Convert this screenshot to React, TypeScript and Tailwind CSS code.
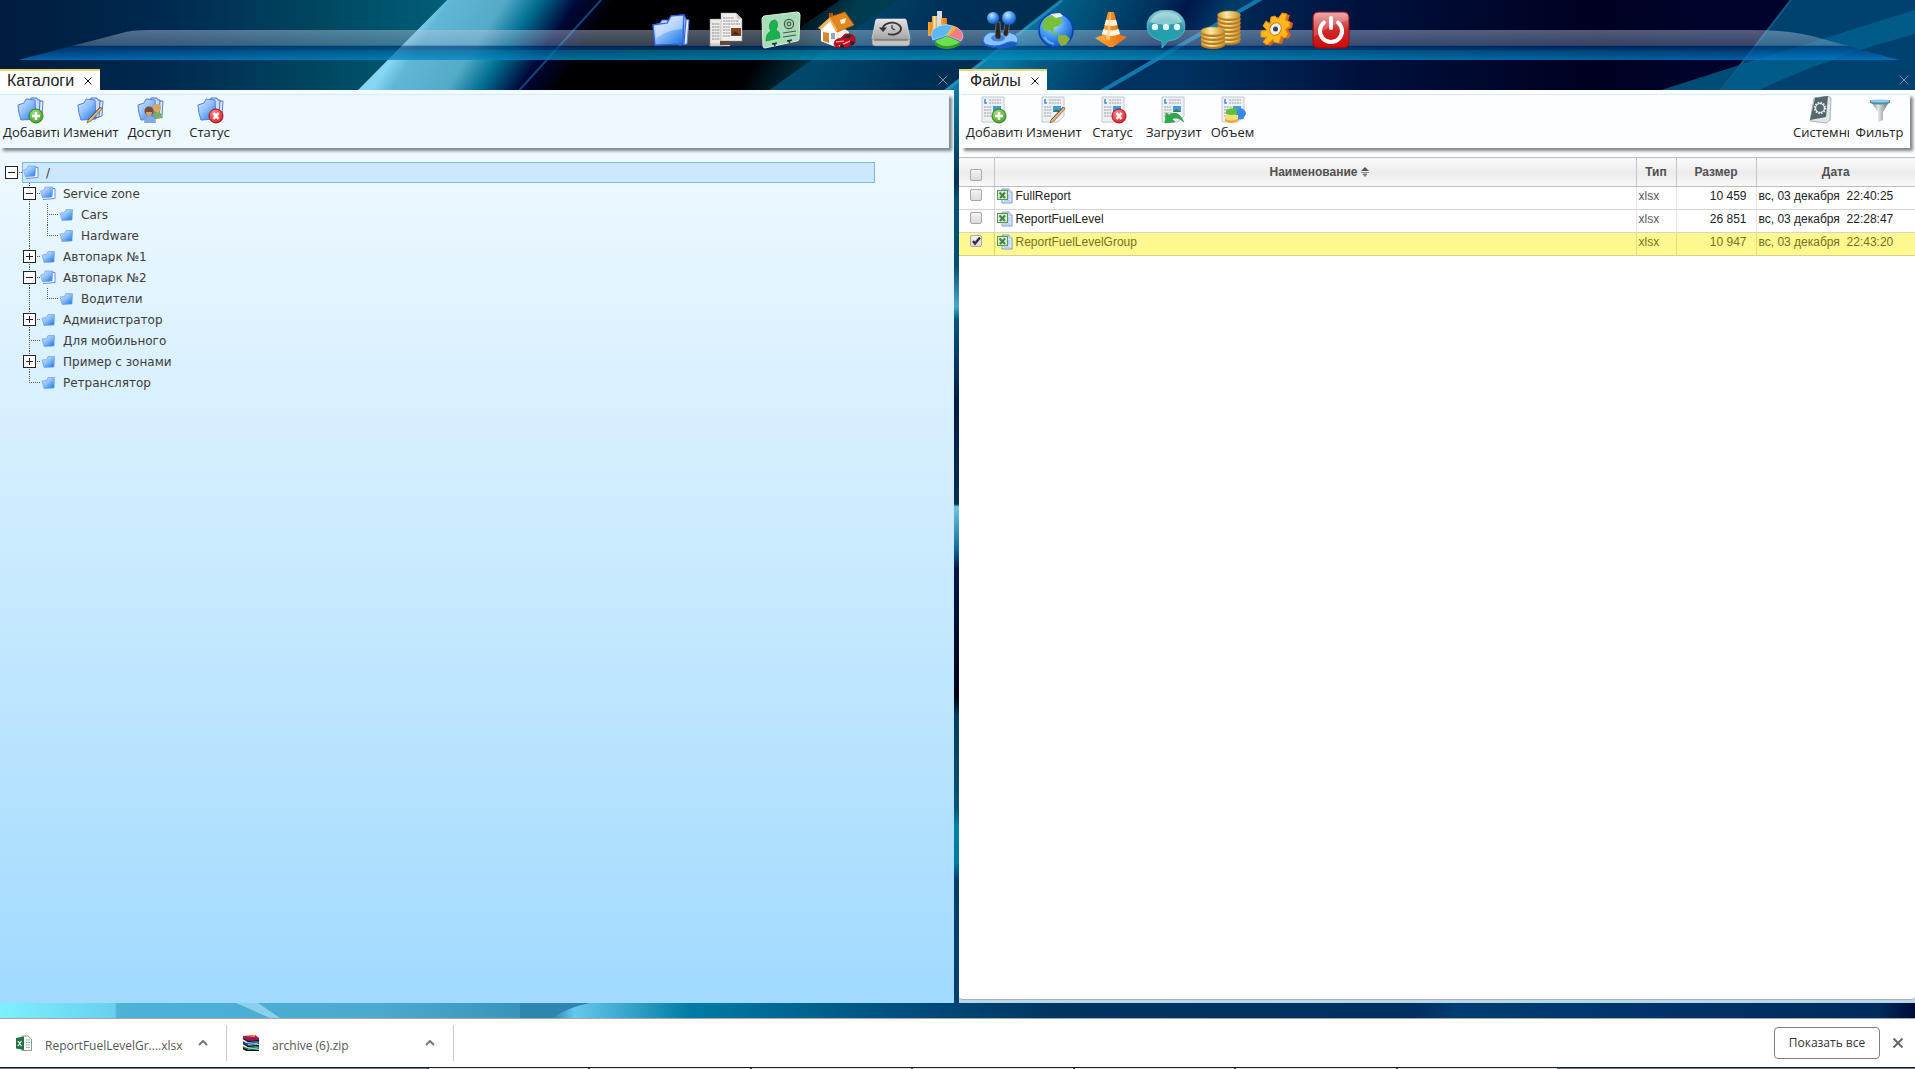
import type { ReactNode } from 'react';

function Defs() {
  return (
    <svg className="absolute h-0 w-0" aria-hidden="true">
      <defs>
        <linearGradient id="folder" x1="0" y1="0" x2="0.9" y2="1">
          <stop offset="0" stopColor="#d6eaff" />
          <stop offset="0.5" stopColor="#8fbdf8" />
          <stop offset="1" stopColor="#1a78e6" />
        </linearGradient>
        <linearGradient id="steel" x1="0" y1="0" x2="0" y2="1">
          <stop offset="0" stopColor="#e3e3e3" />
          <stop offset="1" stopColor="#a5a5a5" />
        </linearGradient>
        <linearGradient id="steelH" x1="0" y1="0" x2="1" y2="0">
          <stop offset="0" stopColor="#777" />
          <stop offset="0.4" stopColor="#e6e6e6" />
          <stop offset="1" stopColor="#6b6b6b" />
        </linearGradient>
        <linearGradient id="gold" x1="0" y1="0" x2="1" y2="0">
          <stop offset="0" stopColor="#d49c3c" />
          <stop offset="0.4" stopColor="#ffe9a3" />
          <stop offset="1" stopColor="#c48a2c" />
        </linearGradient>
        <linearGradient id="orange" x1="0" y1="0" x2="1" y2="0">
          <stop offset="0" stopColor="#ffa63d" />
          <stop offset="1" stopColor="#e8720a" />
        </linearGradient>
        <linearGradient id="red" x1="0" y1="0" x2="0" y2="1">
          <stop offset="0" stopColor="#e69a9a" />
          <stop offset="0.5" stopColor="#cf2a2a" />
          <stop offset="1" stopColor="#d00808" />
        </linearGradient>
        <radialGradient id="ball" cx="0.4" cy="0.3" r="0.8">
          <stop offset="0" stopColor="#c5e7ff" />
          <stop offset="0.5" stopColor="#3d93f0" />
          <stop offset="1" stopColor="#0a3fae" />
        </radialGradient>
        <radialGradient id="bubble" cx="0.5" cy="0.8" r="0.9">
          <stop offset="0" stopColor="#1ea3b4" />
          <stop offset="0.6" stopColor="#2d98a8" />
          <stop offset="1" stopColor="#b4e2e6" />
        </radialGradient>
        <radialGradient id="green" cx="0.4" cy="0.3" r="0.8">
          <stop offset="0" stopColor="#a5e07c" />
          <stop offset="1" stopColor="#3c9a22" />
        </radialGradient>
        <radialGradient id="redBall" cx="0.4" cy="0.3" r="0.8">
          <stop offset="0" stopColor="#ff8f8f" />
          <stop offset="1" stopColor="#d3121c" />
        </radialGradient>
      </defs>
    </svg>
  );
}

function Wallpaper() {
  return (
    <svg
      className="absolute inset-0 h-full w-full"
      viewBox="0 0 1915 1069"
      preserveAspectRatio="none"
      aria-hidden="true"
    >
      <defs>
        <linearGradient id="sky" gradientUnits="userSpaceOnUse" x1="0" y1="0" x2="1915" y2="0">
          <stop offset="0" stopColor="#001c3e" />
          <stop offset="0.09" stopColor="#002a50" />
          <stop offset="0.17" stopColor="#004862" />
          <stop offset="0.235" stopColor="#006078" />
        </linearGradient>
        <linearGradient id="beam" gradientUnits="userSpaceOnUse" x1="405" y1="40" x2="540" y2="130">
          <stop offset="0" stopColor="#86d6f4" />
          <stop offset="0.1" stopColor="#5fb6d6" />
          <stop offset="0.38" stopColor="#54abc8" />
          <stop offset="0.55" stopColor="#006f92" />
          <stop offset="0.75" stopColor="#00083a" />
          <stop offset="0.95" stopColor="#000003" />
        </linearGradient>
        <linearGradient id="edge" gradientUnits="userSpaceOnUse" x1="780" y1="20" x2="830" y2="50">
          <stop offset="0" stopColor="#000003" />
          <stop offset="1" stopColor="#003c50" />
        </linearGradient>
        <linearGradient id="mid" gradientUnits="userSpaceOnUse" x1="850" y1="0" x2="1050" y2="100">
          <stop offset="0" stopColor="#00486a" />
          <stop offset="0.4" stopColor="#003058" />
          <stop offset="1" stopColor="#002c4c" />
        </linearGradient>
        <linearGradient id="mid2" gradientUnits="userSpaceOnUse" x1="1010" y1="40" x2="1170" y2="120">
          <stop offset="0" stopColor="#0e7ba6" />
          <stop offset="0.2" stopColor="#005c84" />
          <stop offset="0.65" stopColor="#00315c" />
          <stop offset="0.8" stopColor="#00164a" />
          <stop offset="1" stopColor="#003a66" />
        </linearGradient>
        <linearGradient id="night" gradientUnits="userSpaceOnUse" x1="1180" y1="0" x2="1700" y2="0">
          <stop offset="0" stopColor="#003260" />
          <stop offset="0.35" stopColor="#00103c" />
          <stop offset="0.8" stopColor="#000020" />
          <stop offset="1" stopColor="#00042c" />
        </linearGradient>
        <linearGradient id="seam" x1="0" y1="0" x2="0" y2="1">
          <stop offset="0" stopColor="#0a7ba5" />
          <stop offset="0.1" stopColor="#01304f" />
          <stop offset="0.12" stopColor="#005478" />
          <stop offset="0.19" stopColor="#004c70" />
          <stop offset="0.235" stopColor="#4aa8ce" />
          <stop offset="0.25" stopColor="#015782" />
          <stop offset="0.34" stopColor="#001c45" />
          <stop offset="0.45" stopColor="#012e58" />
          <stop offset="0.453" stopColor="#72c4ea" />
          <stop offset="0.5" stopColor="#0b6a9c" />
          <stop offset="0.52" stopColor="#00174c" />
          <stop offset="0.66" stopColor="#000018" />
          <stop offset="0.68" stopColor="#003c60" />
          <stop offset="0.78" stopColor="#005478" />
          <stop offset="0.8" stopColor="#0082a6" />
          <stop offset="0.84" stopColor="#0078a0" />
          <stop offset="0.86" stopColor="#003e6e" />
          <stop offset="1" stopColor="#003f6e" />
        </linearGradient>
        <linearGradient id="floor" x1="0" y1="0" x2="1" y2="0">
          <stop offset="0" stopColor="#7df0ff" />
          <stop offset="0.06" stopColor="#68d0ee" />
          <stop offset="0.061" stopColor="#4cb2d8" />
          <stop offset="0.2" stopColor="#4ba9cf" />
          <stop offset="0.29" stopColor="#348eb6" />
          <stop offset="0.3" stopColor="#66c8ee" />
          <stop offset="0.36" stopColor="#007ba5" />
          <stop offset="0.47" stopColor="#004f80" />
          <stop offset="0.55" stopColor="#003560" />
          <stop offset="0.74" stopColor="#002f62" />
          <stop offset="0.76" stopColor="#003d72" />
          <stop offset="0.9" stopColor="#003066" />
          <stop offset="0.98" stopColor="#002c5c" />
          <stop offset="1" stopColor="#000a38" />
        </linearGradient>
        <linearGradient id="dockGlass" x1="0" y1="0" x2="0" y2="1">
          <stop offset="0" stopColor="#b9c8e0" stopOpacity="0.45" />
          <stop offset="0.5" stopColor="#8ea6c4" stopOpacity="0.4" />
          <stop offset="0.54" stopColor="#003a78" stopOpacity="0.65" />
          <stop offset="1" stopColor="#0080d8" stopOpacity="0.7" />
        </linearGradient>
        <linearGradient id="dockGlow" x1="0" y1="0" x2="1" y2="0">
          <stop offset="0" stopColor="#00a0a0" stopOpacity="0" />
          <stop offset="0.4" stopColor="#00a8a0" stopOpacity="0.35" />
          <stop offset="0.6" stopColor="#00a8b0" stopOpacity="0.35" />
          <stop offset="1" stopColor="#00a0a0" stopOpacity="0" />
        </linearGradient>
      </defs>

      <rect width="1915" height="1069" fill="#003f6e" />
      <rect width="500" height="95" fill="url(#sky)" />
      <polygon points="447,0 1300,0 1300,95 353,95" fill="#000003" />
      <polygon points="447,0 640,0 550,95 353,95" fill="url(#beam)" />
      <path d="M601 0L515 95" stroke="#0f4478" strokeWidth="2" />
      <polygon points="840,0 900,0 762,95 700,95" fill="url(#edge)" />
      <polygon points="897,0 1062,0 940,95 762,95" fill="url(#mid)" />
      <polygon points="1062,0 1260,0 1100,95 938,95" fill="url(#mid2)" />
      <path d="M1062 0L940 95" stroke="#2a9cc8" strokeWidth="3" opacity="0.7" />
      <polygon points="1260,0 1915,0 1915,95 1095,95" fill="url(#night)" />
      <path d="M1262 -2Q1180 46 1097 94" stroke="#0f78ac" strokeWidth="4" fill="none" />
      <polygon points="1791,0 1915,0 1915,95 1717,95" fill="#00426f" />
      <path d="M1915 10Q1780 52 1655 92H1755Q1830 56 1915 34Z" fill="#006492" opacity="0.75" />
      <path d="M1791 0L1717 95" stroke="#0f5a86" strokeWidth="2" />

      <rect x="950" y="90" width="14" height="920" fill="url(#seam)" />
      <rect y="1000" width="1915" height="24" fill="url(#floor)" />
      <path d="M236 1003H258L280 1018H270Z" fill="#b4e8fa" opacity="0.6" />
      <path d="M590 1003Q566 1008 552 1018H520V1003Z" fill="#2d86b0" />

      <path d="M18 60L122 33Q130 30 150 30H1750Q1790 30 1812 36L1899 60Z" fill="url(#dockGlass)" />
      <rect x="60" y="50" width="1780" height="10" fill="url(#dockGlow)" />
    </svg>
  );
}

function Big({ children }: { children: ReactNode }) {
  return (
    <svg viewBox="0 0 40 40" className="h-10 w-10" aria-hidden="true">
      {children}
    </svg>
  );
}

const coins = (x: number, top: number, n: number, rx: number) =>
  Array.from({ length: n }, (_, i) => n - 1 - i).map((i) => (
    <g key={`${x}-${i}`}>
      <ellipse cx={x} cy={top + 3 + i * 4} rx={rx} ry="4" fill="#b57a20" />
      <ellipse cx={x} cy={top + i * 4 + 1} rx={rx} ry="4" fill="url(#gold)" stroke="#c9922e" strokeWidth="0.6" />
    </g>
  ));

const dock: { name: string; icon: ReactNode }[] = [
  {
    name: 'Каталоги',
    icon: (
      <Big>
        <path d="M31 9L38 10L36 34L28 35Z" fill="#e8f2ff" stroke="#5b82e0" />
        <path d="M2 15L9 13L11 10H17L18 12L20 6L33 5L35 9L33 34L5 35Z" fill="#c2dcff" stroke="#3a5fe0" strokeWidth="1.2" />
        <path d="M2 15L16 13L20 6L33 5L32 34L4 35Z" fill="url(#folder)" stroke="#2f5ce0" strokeWidth="1.2" />
        <path d="M4 16L17 14L21 7L32 6L31 19Q16 20 5 28Z" fill="#fff" opacity="0.4" />
      </Big>
    ),
  },
  {
    name: 'Файлы',
    icon: (
      <Big>
        <path d="M4 9H16V36H4Z M16 34H24V36H4V34Z" fill="#eceae6" stroke="#8a8a86" strokeWidth="0.5" />
        <path d="M15 3H30L36 9V31H15Z" fill="#f3f1ee" stroke="#9a9a96" strokeWidth="0.5" />
        <path d="M30 3L31 9H36Z" fill="#c9c7c4" />
        <path d="M17 8H28M17 11H33M17 14H34M17 17H24M17 20H24M17 23H24M17 26H24M6 14H14M6 17H14M6 20H14M6 23H14M6 26H14M6 29H14" stroke="#888" strokeDasharray="2 0.6" />
        <rect x="25" y="18" width="10" height="8" fill="#87421f" />
        <path d="M26 25L29 21L34 25" fill="#33312e" />
        <rect x="14" y="31" width="10" height="4" fill="#5d4a3d" />
      </Big>
    ),
  },
  {
    name: 'Контакты',
    icon: (
      <Big>
        <path d="M1 9Q1 7 3 6L36 2Q39 2 39 5L38 29Q38 31 36 31L4 38Q2 38 2 36Z" fill="#a9dcb8" stroke="#d5f0dc" />
        <path d="M13 10Q17 10 16.5 16L15 20Q19 21 19 28L5 31Q5 23 10 21Q8 19 8.5 15Q9 11 13 10Z" fill="#19b24d" stroke="#0a8c38" strokeWidth="0.6" />
        <circle cx="28" cy="14" r="4.6" fill="none" stroke="#44584c" strokeWidth="1.2" />
        <circle cx="28" cy="14" r="1.8" fill="none" stroke="#44584c" strokeWidth="1.2" />
        <path d="M22 23L35 21M22 27L35 25" stroke="#44584c" strokeWidth="1.2" />
        <path d="M11 34L16 33M13.5 33L14 36M26 31L31 30M28.5 30V33" stroke="#1d3a29" strokeWidth="1.6" />
      </Big>
    ),
  },
  {
    name: 'Дом и авто',
    icon: (
      <Big>
        <path d="M5 16L14 8L33 22V35L20 37L5 31Z" fill="#f2ece4" />
        <path d="M5 16L14 8L20 20V37L5 31Z" fill="#fffdf8" />
        <path d="M13 3H17V8H13Z" fill="#b5520f" />
        <path d="M14 7L29 2L38 15L21 22Z" fill="#e3861d" stroke="#b9610b" strokeWidth="0.8" />
        <path d="M14 7L2 18L5 20L14 11L20 22L22 21Z" fill="#f2b45b" />
        <path d="M24 10L30 8L29 13L25 14Z" fill="#fff3df" />
        <path d="M7 22L13 23V33L7 31Z" fill="#d08a34" />
        <rect x="15" y="23" width="4" height="6" fill="#8fa7b8" />
        <path d="M18 34Q18 29 25 28L29 24Q37 23 39 28V33Q34 38 24 38Q18 38 18 34Z" fill="#c60d20" stroke="#7a0511" strokeWidth="0.6" />
        <path d="M27 28L30 25H35L34 28Z" fill="#2b2b38" />
        <path d="M20 32L28 31M23 36L34 31" stroke="#f5c9cc" strokeWidth="1.2" />
        <circle cx="26" cy="36" r="2" fill="#222" />
        <circle cx="36" cy="33" r="2" fill="#222" />
      </Big>
    ),
  },
  {
    name: 'Резервные копии',
    icon: (
      <Big>
        <path d="M6 9H34Q35 9 35.5 11L39 29H1L4.5 11Q5 9 6 9Z" fill="url(#steel)" stroke="#efefef" strokeWidth="0.6" />
        <path d="M1 29H39V33Q39 36 36 36H4Q1 36 1 33Z" fill="#c4c4c4" stroke="#6d6d6d" strokeWidth="0.6" />
        <path d="M3 30H37" stroke="#5a5a5a" />
        <path d="M12 19A9 6 0 1 1 17 24" fill="none" stroke="#333" strokeWidth="1.8" />
        <path d="M8 17.5H16L12 22Z" fill="#333" />
        <path d="M21 15V18.5L24 20" fill="none" stroke="#333" strokeWidth="1.2" />
      </Big>
    ),
  },
  {
    name: 'Отчёты',
    icon: (
      <Big>
        <rect x="2" y="12" width="7" height="14" fill="url(#orange)" />
        <rect x="6" y="6" width="6" height="22" fill="url(#gold)" />
        <rect x="11" y="1" width="5" height="20" fill="#d5dde2" />
        <rect x="15" y="8" width="6" height="12" fill="url(#orange)" />
        <ellipse cx="21" cy="27" rx="16" ry="11" fill="#2a6fd0" />
        <path d="M21 25L7 30Q2 20 13 16Q20 13 27 16Z" fill="#5cb7f4" stroke="#d5eeff" strokeWidth="0.6" />
        <path d="M21 25L27 16Q37 19 37 27L35 31Z" fill="#f27c86" stroke="#ffd9dc" strokeWidth="0.6" />
        <path d="M21 25L27 16L31 17.5L23 26Z" fill="#f5b335" />
        <path d="M21 27L34 32V35Q28 39 21 39Q13 39 9 35V31Z" fill="#2f9a2a" />
        <path d="M21 26L34 32Q28 36 21 36Q13 36 9 31Z" fill="#6ede4c" />
      </Big>
    ),
  },
  {
    name: 'Управление',
    icon: (
      <Big>
        <ellipse cx="19" cy="32" rx="18" ry="6.5" fill="#1a57c8" />
        <path d="M3 27Q9 19 17 24Q24 20 33 24Q39 28 36 33Q30 30 23 34Q13 38 4 34Q1 31 3 27Z" fill="#86c3fb" stroke="#2f73d8" />
        <ellipse cx="17" cy="28" rx="7" ry="3.5" fill="#3d86e0" />
        <path d="M14 27L15 12H19L20 28Q17 31 14 27Z" fill="#26282e" stroke="#777" strokeWidth="0.8" />
        <circle cx="12" cy="8" r="6" fill="url(#ball)" />
        <path d="M22 24L25 10H29L27 25Q24 28 22 24Z" fill="#26282e" stroke="#777" strokeWidth="0.8" />
        <circle cx="28" cy="8" r="7" fill="url(#ball)" />
      </Big>
    ),
  },
  {
    name: 'Карта',
    icon: (
      <Big>
        <circle cx="20" cy="20" r="17.5" fill="url(#ball)" />
        <circle cx="20" cy="20" r="17" fill="none" stroke="#0d3db0" strokeWidth="1.5" />
        <path d="M6 14Q9 6 18 5L24 7L27 11L23 16L18 17L17 21L22 23L20 25L13 20L8 20Z" fill="#76c03c" />
        <path d="M22 25L30 25L34 29L30 35L25 36L22 31Z" fill="#8bb13a" />
        <path d="M14 4L24 3L27 6L20 8Z" fill="#f4fbff" />
        <path d="M8 27Q12 33 18 34" stroke="#8ed5ff" strokeWidth="2" fill="none" opacity="0.6" />
      </Big>
    ),
  },
  {
    name: 'Дороги',
    icon: (
      <Big>
        <path d="M4 28L19 22L36 27L22 37L18 37Z" fill="url(#orange)" />
        <path d="M17 2H23L30 29Q20 35 10 29Z" fill="url(#orange)" />
        <path d="M15 10H25L26.5 15Q20 17 13.5 15Z" fill="#fff2dc" />
        <path d="M12.5 19Q20 22 27.5 19L29 24Q20 28 11 24Z" fill="#fff6e8" />
        <path d="M19 2H20L19 30L15 29Z" fill="#ffd391" opacity="0.7" />
      </Big>
    ),
  },
  {
    name: 'Сообщения',
    icon: (
      <Big>
        <path d="M20 0C32 0 39 7 39 16C39 25 32 30 22 31L16 38L16 31C7 29 1 24 1 16C1 7 8 0 20 0Z" fill="url(#bubble)" stroke="#5fb8c2" strokeWidth="0.8" />
        <path d="M4 12Q8 2 20 2Q32 2 36 12Q20 18 4 12Z" fill="#e2f6f8" opacity="0.5" />
        <circle cx="9" cy="17" r="3.2" fill="#dff6fa" />
        <circle cx="20" cy="17" r="3.2" fill="#dff6fa" />
        <circle cx="31" cy="17" r="3.2" fill="#dff6fa" />
      </Big>
    ),
  },
  {
    name: 'Финансы',
    icon: (
      <Big>
        {coins(28, 4, 7, 11.5)}
        {coins(12, 20, 4, 12)}
      </Big>
    ),
  },
  {
    name: 'Настройки',
    icon: (
      <Big>
        <path
          d="M19 6L22 9L26 3L31 4L29 10L34 12L33 17L29 19L32 24L29 28L25 26L23 33L18 32L17 29L11 35L7 32L11 27L5 27L5 21L11 20L7 16L10 11L14 14L15 7Z"
          fill="#e0660d"
          transform="translate(3 1)"
        />
        <path
          d="M19 6L22 9L26 3L31 4L29 10L34 12L33 17L29 19L32 24L29 28L25 26L23 33L18 32L17 29L11 35L7 32L11 27L5 27L5 21L11 20L7 16L10 11L14 14L15 7Z"
          fill="#fbb81e"
          stroke="#f28d12"
        />
        <ellipse cx="19.5" cy="19" rx="5.5" ry="6.5" fill="#ededed" stroke="#c98312" transform="rotate(25 19.5 19)" />
        <circle cx="19.5" cy="19" r="2.5" fill="#3a3f52" />
      </Big>
    ),
  },
  {
    name: 'Выход',
    icon: (
      <Big>
        <rect x="2" y="2" width="36" height="36" rx="5" fill="url(#red)" stroke="#8e1313" />
        <path d="M3 8Q3 3 8 3H32Q37 3 37 8V10Q20 14 3 27Z" fill="#fff" opacity="0.18" />
        <path d="M13 12.5A11 11 0 1 0 27 12.5" fill="none" stroke="#fff" strokeWidth="4" strokeLinecap="round" />
        <path d="M20 8V18" stroke="#fff" strokeWidth="4" strokeLinecap="round" />
      </Big>
    ),
  },
];

type Badge = 'add' | 'edit' | 'users' | 'remove' | 'upload' | 'volume';

function BadgeShape({ kind }: { kind: Badge }) {
  switch (kind) {
    case 'add':
      return (
        <>
          <circle cx="20" cy="20" r="7" fill="url(#green)" stroke="#2f8519" />
          <path d="M20 16V24M16 20H24" stroke="#fff" strokeWidth="2.4" />
        </>
      );
    case 'remove':
      return (
        <>
          <circle cx="20" cy="20" r="7" fill="url(#redBall)" stroke="#b01019" />
          <path d="M17.5 17L22.5 23M22.5 17L17.5 23" stroke="#fff" strokeWidth="2.4" />
        </>
      );
    case 'edit':
      return (
        <>
          <path d="M25 11L26 13L15 25L11 27L12 24Z" fill="#e0b878" stroke="#6b4a1f" strokeWidth="0.6" />
          <path d="M24 11L12 24" stroke="#4d4436" strokeWidth="0.8" />
        </>
      );
    case 'users':
      return (
        <>
          <path d="M17 20Q17 16 21 16Q26 16 27 22L20 23Z" fill="#7fae58" />
          <circle cx="21" cy="12" r="4" fill="#d7a957" />
          <path d="M8 27Q8 20 14 20Q20 20 20 27Z" fill="#84abe0" />
          <circle cx="13" cy="15" r="4.5" fill="#7b4a2f" />
          <path d="M10 16H16Q16 20 13 20Q10 20 10 16Z" fill="#d69d72" />
        </>
      );
    case 'upload':
      return <path d="M6 27L7 17L10 19Q19 13 25 26Q18 20 13 23L16 26Z" fill="#2fa84a" stroke="#1b8a35" strokeWidth="0.5" />;
    case 'volume':
      return (
        <>
          <path d="M16 16L22 12Q27 14 27 18L24 23L17 24Z" fill="#3c86e8" />
          <path d="M6 22H19V25Q12 29 6 25Z" fill="#f0a340" />
          <path d="M6 19H19V23Q12 26 6 23Z" fill="#f7dc72" />
          <path d="M7 14Q12 11 18 13V18Q12 20 7 18Z" fill="#5cc03a" />
        </>
      );
  }
}

function FolderTool({ badge }: { badge: Badge }) {
  return (
    <svg viewBox="0 0 28 28" className="h-7 w-7" aria-hidden="true">
      <path d="M20 5L27 5L26 20L20 22Z" fill="#d9eaff" stroke="#5b7fd6" />
      <path d="M14 4L15 2H21L22 4L24 4L23 21L12 23Z" fill="#c5ddfb" stroke="#4d74d0" />
      <path d="M2 9L8 7L10 3L19 4L20 23L5 24Q2 16 2 9Z" fill="url(#folder)" stroke="#5580dd" />
      <BadgeShape kind={badge} />
    </svg>
  );
}

function PageTool({ badge }: { badge: Badge }) {
  return (
    <svg viewBox="0 0 28 28" className="h-7 w-7" aria-hidden="true">
      <path d="M3 1H25V20L19 26H3Z" fill="#eef0f3" stroke="#c4c8ce" />
      <path d="M6 3V7H8" stroke="#3d8fdc" strokeWidth="1.5" fill="none" />
      <path d="M10 4H22M10 7H22M5 11H13M5 14H13M5 17H13M5 20H13" stroke="#b3b9c4" strokeWidth="1.3" strokeDasharray="2 0.7" />
      <rect x="14" y="10" width="8" height="6" fill="#3f9be0" />
      <path d="M14 16L17 13L22 16Z" fill="#3d7f4c" />
      <BadgeShape kind={badge} />
    </svg>
  );
}

function SystemIcon() {
  return (
    <svg viewBox="0 0 28 28" className="h-7 w-7" aria-hidden="true">
      <path d="M8 2L22 0L25 2L24 24L20 27L4 25Z" fill="#dfe5e8" stroke="#aab3b8" />
      <path d="M9 2L22 0L20 21L4 24Z" fill="#56666e" />
      <circle cx="14" cy="12" r="5" fill="none" stroke="#e3ecf0" strokeWidth="2.4" strokeDasharray="1.4 1.2" />
      <circle cx="14" cy="12" r="4.5" fill="none" stroke="#e3ecf0" strokeWidth="1.2" />
    </svg>
  );
}

function FilterIcon() {
  return (
    <svg viewBox="0 0 28 28" className="h-7 w-7" aria-hidden="true">
      <path d="M5 6Q14 10 23 6L17 16V24L12 26V16Z" fill="url(#steelH)" />
      <path d="M4 4H24V7Q14 10 4 7Z" fill="#3d8fb2" />
      <ellipse cx="14" cy="5" rx="10" ry="1.6" fill="#8ccbe4" />
    </svg>
  );
}

function TreeFolder({ open }: { open?: boolean }) {
  return (
    <svg viewBox="0 0 16 16" className="h-4 w-4" aria-hidden="true">
      {open ? (
        <>
          <path d="M11 2.5H15V12.5L3 13.5" fill="#fff" stroke="#5b90e0" />
          <path d="M0.500 5L4 4L5 1H13L12 11L2.500 12Z" fill="url(#folder)" stroke="#78a8ea" strokeWidth="0.700" />
        </>
      ) : (
        <path d="M2 6L6.500 5.500L8 2.500H14.500L14 13L4 13.500Z" fill="url(#folder)" stroke="#6da3ea" strokeWidth="0.700" />
      )}
    </svg>
  );
}

function ToolButton({ label, icon }: { label: string; icon: ReactNode }) {
  return (
    <button
      type="button"
      className="mr-px flex w-[59px] shrink-0 cursor-pointer flex-col overflow-hidden px-[3px]"
    >
      <span className="self-center">{icon}</span>
      <span className="mx-auto font-['Open_Sans',sans-serif] text-[13px] leading-4 whitespace-nowrap text-[#222]">
        {label}
      </span>
    </button>
  );
}

function TabHead({ title, inset }: { title: string; inset: string }) {
  return (
    <div className="flex h-[21px] items-center justify-between">
      <div className={`flex h-full items-center gap-[6px] border-t-2 border-[#e8d870] bg-white pr-1 ${inset}`}>
        <h2 className="text-base leading-[19px] text-[#222]">{title}</h2>
        <button type="button" aria-label={`Закрыть ${title}`} className="cursor-pointer p-1">
          <svg viewBox="0 0 8 8" className="h-2 w-2" aria-hidden="true">
            <path d="M0.500 0.500L7.500 7.500M7.500 0.500L0.500 7.500" stroke="#111" />
          </svg>
        </button>
      </div>
      <button type="button" aria-label="Закрыть панель" className="mr-[6px] cursor-pointer">
        <svg viewBox="0 0 10 10" className="h-[10px] w-[10px]" aria-hidden="true">
          <path d="M0.500 0.500L9.500 9.500M9.500 0.500L0.500 9.500" stroke="#7d93a6" />
        </svg>
      </button>
    </div>
  );
}

// guides: one letter per 18px cell
// ' ' empty, '|' line, 't' branch, 'l' last branch, '-' / '+' expander, 'r' root expander
type TreeNode = { name: string; guides: string; open?: boolean; selected?: boolean };

const tree: TreeNode[] = [
  { name: '/', guides: 'r', open: true, selected: true },
  { name: 'Service zone', guides: ' -', open: true },
  { name: 'Cars', guides: ' |t' },
  { name: 'Hardware', guides: ' |l' },
  { name: 'Автопарк №1', guides: ' +' },
  { name: 'Автопарк №2', guides: ' -', open: true },
  { name: 'Водители', guides: ' |l' },
  { name: 'Администратор', guides: ' +' },
  { name: 'Для мобильного', guides: ' t' },
  { name: 'Пример с зонами', guides: ' +' },
  { name: 'Ретранслятор', guides: ' l' },
];

function Guide({ kind }: { kind: string }) {
  const box = 'r-+'.includes(kind);
  const dots = { stroke: '#555', strokeDasharray: '1 1' };
  return (
    <svg viewBox="0 0 18 21" className="h-[21px] w-[18px] shrink-0 overflow-visible" aria-hidden="true">
      {'|t-+'.includes(kind) && <path d="M9.500 0V21" {...dots} />}
      {kind === 'l' && <path d="M9.500 0V10.500" {...dots} />}
      {'tlr-+'.includes(kind) && <path d="M9 10.500H20" {...dots} />}
      {box && <rect x="3.500" y="4.500" width="12" height="12" fill="#fff" stroke="#222" />}
      {box && <path d="M6 10.500H13" stroke="#222" />}
      {kind === '+' && <path d="M9.500 7V14" stroke="#222" />}
    </svg>
  );
}

function DirectoryTree() {
  return (
    <ul className="pt-[10px] pr-[79px] pl-0.5 font-['DejaVu_Sans',sans-serif] text-xs text-[#3c3c3c]">
      {tree.map((node) => (
        <li key={node.name} className="flex h-[21px]">
          {node.guides.split('').map((g, i) => (
            <Guide key={i} kind={g} />
          ))}
          <button
            type="button"
            className={
              node.selected
                ? 'ml-0.5 flex flex-1 cursor-pointer items-center gap-[7px] border border-[#7fb6e8] bg-[#cce8ff]'
                : 'ml-0.5 flex cursor-pointer items-center gap-[7px]'
            }
          >
            <TreeFolder open={node.open} />
            <span>{node.name}</span>
          </button>
        </li>
      ))}
    </ul>
  );
}

const files = [
  { name: 'FullReport', type: 'xlsx', size: '10 459', date: 'вс, 03 декабря  22:40:25', checked: false },
  { name: 'ReportFuelLevel', type: 'xlsx', size: '26 851', date: 'вс, 03 декабря  22:28:47', checked: false },
  { name: 'ReportFuelLevelGroup', type: 'xlsx', size: '10 947', date: 'вс, 03 декабря  22:43:20', checked: true },
];

function Tick({ label, checked }: { label: string; checked?: boolean }) {
  return (
    <span className="ml-[11px] grid h-3 w-3">
      <input
        type="checkbox"
        aria-label={label}
        defaultChecked={checked}
        className="peer col-start-1 row-start-1 h-3 w-3 appearance-none rounded-xs border border-[#a8a8a8] bg-linear-to-b from-[#f2f2f2] to-[#dcdcdc]"
      />
      <svg
        viewBox="0 0 12 12"
        className="pointer-events-none invisible col-start-1 row-start-1 h-3 w-3 peer-checked:visible"
        aria-hidden="true"
      >
        <path d="M3 6L5 8.500L10 2.500" fill="none" stroke="#333" strokeWidth="2.400" />
      </svg>
    </span>
  );
}

function XlsIcon() {
  return (
    <svg viewBox="0 0 16 16" className="h-4 w-4 shrink-0" aria-hidden="true">
      <path d="M5 1H12L15 4V15H5Z" fill="#dfeafc" stroke="#7a9ad0" />
      <path d="M12 1V4H15" fill="#fff" stroke="#7a9ad0" strokeWidth="0.700" />
      <path d="M7 13H13M12 6V11" stroke="#9db7e2" />
      <rect x="0.500" y="2.500" width="10" height="9" fill="#d9ead5" stroke="#5d965a" />
      <path d="M2.500 4.500L8 10M8 4.500L3 10" stroke="#3f8640" strokeWidth="2" />
    </svg>
  );
}

function FileTable() {
  const th = 'border-r border-[#c4c4c4] p-0 font-bold';
  return (
    <table className="mt-[9px] w-full table-fixed border-collapse text-xs leading-[18px]">
      <colgroup>
        <col className="w-[35px]" />
        <col />
        <col className="w-[40px]" />
        <col className="w-[80px]" />
        <col className="w-[159px]" />
      </colgroup>
      <thead>
        <tr className="h-[29px] border-y border-[#bdbdbd] bg-linear-to-b from-[#fafafa] via-[#ececec] to-[#f8f8f8] text-[#505050]">
          <th className={`${th} pt-[11px] align-top`}>
            <Tick label="Выбрать все" />
          </th>
          <th className={th}>
            <button type="button" className="ml-2 inline-flex cursor-pointer items-center gap-[3px] align-top">
              Наименование
              <svg viewBox="0 0 8 10" className="h-[10px] w-2" aria-hidden="true">
                <path d="M4 0L8 4H0Z" fill="#555" />
                <path d="M0 5.500H8M2 7H6L4 9.500Z" fill="#777" stroke="#777" strokeWidth="0.800" />
              </svg>
            </button>
          </th>
          <th className={th}>Тип</th>
          <th className={th}>Размер</th>
          <th className="p-0 font-bold">Дата</th>
        </tr>
      </thead>
      <tbody>
        {files.map((f) => (
          <tr
            key={f.name}
            className={
              f.checked
                ? 'h-[23px] border-b border-[#d5d294] bg-[#fef88f] text-[#75721c]'
                : 'h-[23px] border-b border-[#d4d4d4] text-[#222]'
            }
          >
            <td className="border-r border-black/15 p-0 pt-0.5 align-top">
              <Tick label={f.name} checked={f.checked} />
            </td>
            <td className="border-r border-black/10 p-0 pl-0.5 align-top">
              <span className="flex items-center gap-[3px]">
                <XlsIcon />
                {f.name}
              </span>
            </td>
            <td className={f.checked ? 'border-r border-black/10 p-0 pl-0.5 align-top' : 'border-r border-black/10 p-0 pl-0.5 align-top text-[#555]'}>
              {f.type}
            </td>
            <td className="border-r border-black/10 p-0 pr-[9px] text-right align-top">{f.size}</td>
            <td className="p-0 pl-0.5 align-top whitespace-pre">{f.date}</td>
          </tr>
        ))}
      </tbody>
    </table>
  );
}

const toolbar = 'mr-[5px] flex h-[54px] border-t border-t-[#d8eafa] pt-px shadow-[3px_3px_3px_#7d868e]';

function Chevron() {
  return (
    <button type="button" aria-label="Действия" className="mr-[18px] cursor-pointer">
      <svg viewBox="0 0 10 6" className="h-[6px] w-[10px]" aria-hidden="true">
        <path d="M1 5L5 1L9 5" fill="none" stroke="#777" strokeWidth="2" />
      </svg>
    </button>
  );
}

function DownloadBar() {
  return (
    <footer className="relative flex h-[49px] items-center border-t border-[#a8a8a8] bg-white font-['Open_Sans',sans-serif] text-xs text-[#555]">
      <div className="flex h-9 w-[227px] items-center border-r border-[#ccc] pl-4">
        <svg viewBox="0 0 16 16" className="h-4 w-4" aria-hidden="true">
          <path d="M6 1H12L15.500 4V15.500H6Z" fill="#fff" stroke="#8a9a90" />
          <path d="M10 5H14M10 7.500H14M10 10H14M10 12.500H14" stroke="#6aa383" strokeDasharray="1.500 0.800" />
          <path d="M0 3L8 1.500V15L0 13.500Z" fill="#1f7244" />
          <path d="M2 6L5.500 11M5.500 6L2 11" stroke="#fff" strokeWidth="1.300" />
        </svg>
        <a href="#report" className="ml-[13px] flex-1 pt-1.5">ReportFuelLevelGr....xlsx</a>
        <Chevron />
      </div>
      <div className="flex h-9 w-[227px] items-center border-r border-[#ccc] pl-4">
        <svg viewBox="0 0 16 16" className="h-4 w-4" aria-hidden="true">
          <path d="M0 1L12 0L16 3V5L4 6L0 3Z" fill="#a8135e" />
          <path d="M2 1L12 0V2Z" fill="#e8a32b" />
          <path d="M0 6L4 8L16 6V9L4 11L0 8Z" fill="#1a4fb8" />
          <path d="M0 11L4 13L16 11V14L4 16L0 14Z" fill="#12854a" />
          <path d="M4 6.500L16 5.500M4 11.500L16 10.500M0 3.500L4 6M0 8.500L4 11M0 13.500L4 15.500H16" stroke="#111" strokeWidth="1.400" fill="none" />
          <path d="M5 9.500L15 8M5 14L15 13" stroke="#7fe0d0" />
        </svg>
        <a href="#archive" className="ml-[13px] flex-1 pt-1.5">archive (6).zip</a>
        <Chevron />
      </div>
      <button
        type="button"
        className="ml-auto h-8 w-[106px] cursor-pointer rounded border border-[#808080] text-[#333]"
      >
        Показать все
      </button>
      <button type="button" aria-label="Закрыть" className="mr-3 ml-[13px] cursor-pointer">
        <svg viewBox="0 0 10 10" className="h-[10px] w-[10px]" aria-hidden="true">
          <path d="M0.500 0.500L9.500 9.500M9.500 0.500L0.500 9.500" stroke="#666" strokeWidth="2" />
        </svg>
      </button>
    </footer>
  );
}

export default function App() {
  return (
    <div className="relative flex h-screen flex-col overflow-hidden font-['Liberation_Sans',Arial,sans-serif]">
      <Defs />
      <Wallpaper />

      <nav className="relative flex h-[69px] justify-center pt-[10px] pl-[86px]" aria-label="Главное меню">
        {dock.map((item) => (
          <button
            key={item.name}
            type="button"
            aria-label={item.name}
            className="flex h-10 w-[55px] cursor-pointer justify-center"
          >
            {item.icon}
          </button>
        ))}
      </nav>

      <main className="relative grid min-h-0 flex-1 grid-cols-[954fr_956fr] gap-[5px] pb-[15px]">
        <section className="flex min-w-0 flex-col">
          <TabHead title="Каталоги" inset="pl-[7px]" />
          <div className="flex-1 bg-linear-to-b from-[#f4fbff] to-[#a0daff] pt-1">
            <div className={`${toolbar} bg-[#edf8ff]`}>
              <ToolButton label="Добавить" icon={<FolderTool badge="add" />} />
              <ToolButton label="Изменит" icon={<FolderTool badge="edit" />} />
              <ToolButton label="Доступ" icon={<FolderTool badge="users" />} />
              <ToolButton label="Статус" icon={<FolderTool badge="remove" />} />
            </div>
            <div className="h-1" />
            <DirectoryTree />
          </div>
        </section>

        <section className="flex min-w-0 flex-col">
          <TabHead title="Файлы" inset="pl-[11px]" />
          <div className="flex flex-1 flex-col bg-[#b5d9ea] pb-[3px]">
            <div className="flex-1 rounded-b-sm border-b border-[#b0b0b0] bg-white pt-1">
              <div className={`${toolbar} ml-0.5 bg-[#fcfeff] pl-0.5`}>
                <ToolButton label="Добавить" icon={<PageTool badge="add" />} />
                <ToolButton label="Изменит" icon={<PageTool badge="edit" />} />
                <ToolButton label="Статус" icon={<PageTool badge="remove" />} />
                <ToolButton label="Загрузит" icon={<PageTool badge="upload" />} />
                <ToolButton label="Объем" icon={<PageTool badge="volume" />} />
                <div className="flex-1" />
                <ToolButton label="Системны" icon={<SystemIcon />} />
                <ToolButton label="Фильтр" icon={<FilterIcon />} />
              </div>
              <FileTable />
            </div>
          </div>
        </section>
      </main>

      <DownloadBar />
      <div className="relative flex h-0.5 justify-center border-t border-[#1a1a22] bg-[#6f7a84] pl-[69px]">
        {[0, 1, 2, 3, 4, 5, 6].map((n) => (
          <span key={n} className="w-[8.75%] border-l-2 border-[#444] bg-[#e8e8e8]" />
        ))}
      </div>
    </div>
  );
}
